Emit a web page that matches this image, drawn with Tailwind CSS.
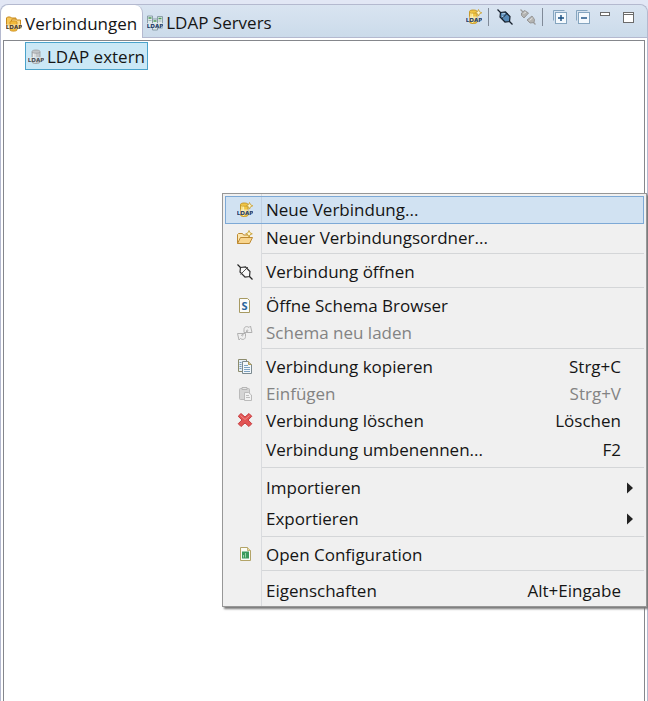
<!DOCTYPE html>
<html lang="de">
<head>
<meta charset="utf-8">
<meta name="viewport" content="width=device-width, initial-scale=1">
<title>Verbindungen</title>
<script src="https://cdn.jsdelivr.net/npm/@tailwindcss/browser@4"></script>
</head>
<body class="bg-[#e2e7f5] font-['Open_Sans','Noto_Sans',sans-serif] text-[17px] leading-6 text-[#151515]">

<!-- Shared icon symbols -->
<svg class="hidden" aria-hidden="true">
  <symbol id="ldap-new" viewBox="0 0 16 16">
    <path d="M3.500 2.500C3.500 .5 11 .5 11 2.500V13c0 2-7.500 2-7.500 0z" fill="#f0c544" stroke="#c79a2a"/>
    <path d="M5 3.500v9.500M6.500 4v10" stroke="#fdf0a8" stroke-width="1.200"/>
    <path d="M3.500 3c0 1.600 7.500 1.600 7.500 0" fill="none" stroke="#c79a2a" stroke-width=".8"/>
    <rect x="3.500" y="7.500" width="8" height="5" fill="#f5efcf" opacity=".7"/>
    <path d="M12.500 .5l1 2.300 2.300 1-2.300 1-1 2.300-1-2.300-2.300-1 2.300-1z" fill="#fff8d0" stroke="#c9a237" stroke-width=".9"/>
    <text x="8" y="12.500" text-anchor="middle" font-family="DejaVu Sans" font-weight="bold" font-size="5.600" fill="#1d3d66">LDAP</text>
  </symbol>
  <symbol id="ldap-folders" viewBox="0 0 16 16">
    <path d="M.5 9.500V2l1-1h3l1 1h4.500v7.500z" fill="#f6c75a" stroke="#c88a1c"/>
    <path d="M5.500 12.500V4l1-1h3l1 1h4v8.500z" fill="#fbd98a" stroke="#c88a1c"/>
    <path d="M4 6c0-1.500 7-1.500 7 0V14c0 1.500-7 1.500-7 0z" fill="#f1b93a" stroke="#c88a1c" stroke-width=".8"/>
    <rect x="0" y="8.500" width="16" height="4.500" fill="#f7e9c4" opacity=".75"/>
    <text x="8" y="13" text-anchor="middle" font-family="DejaVu Sans" font-weight="bold" font-size="5.600" fill="#4a3a26">LDAP</text>
  </symbol>
  <symbol id="ldap-servers" viewBox="0 0 16 16">
    <path d="M.5 1h5v11h-5zM5.500 4h5v11h-5zM10.500 1.500h5V13h-5z" fill="#dfe9ea" stroke="#8297a3" stroke-width=".9"/>
    <path d="M1.500 3h3M6.500 6h3M11.500 3.500h3" stroke="#4d9a57" stroke-width="1.300"/>
    <path d="M1.500 5.500h3M11.500 6h3" stroke="#8fa5ad" stroke-width=".8"/>
    <rect x="0" y="8" width="16" height="4.500" fill="#dce8ee" opacity=".8"/>
    <text x="8" y="12.500" text-anchor="middle" font-family="DejaVu Sans" font-weight="bold" font-size="5.600" fill="#1d3d66">LDAP</text>
  </symbol>
  <symbol id="ldap-closed" viewBox="0 0 16 16">
    <path d="M4 2.500c0-2 8-2 8 0V13c0 2-8 2-8 0z" fill="#c2c5c8" stroke="#9a9da0" stroke-width=".8"/>
    <path d="M5.500 4v9M7 4v10" stroke="#eceeee" stroke-width="1.100"/>
    <path d="M4 3c0 1.600 8 1.600 8 0" fill="none" stroke="#9a9da0" stroke-width=".8"/>
    <rect x="0" y="8" width="16" height="4.500" fill="#d9e6ec" opacity=".8"/>
    <text x="8" y="12.500" text-anchor="middle" font-family="DejaVu Sans" font-weight="bold" font-size="5.600" fill="#4b4f55">LDAP</text>
  </symbol>
</svg>

<main class="relative flex min-h-screen flex-col overflow-hidden pt-1">
  <section class="flex grow flex-col rounded-t-lg border-x border-t border-[#b4b9cf] bg-[#d0deec]">
    <!-- Tabs and view toolbar -->
    <header class="flex h-[33px] items-stretch rounded-t-lg border-b border-[#b4b9cf] bg-linear-to-b from-[#d9e4f1] to-[#cbdbea]">
      <div class="flex" role="tablist">
        <button role="tab" aria-selected="true" class="-mb-px flex items-center gap-[3px] rounded-t-lg border-r border-[#b4b9cf] bg-white px-[5px] pt-1">
          <svg class="size-4"><use href="#ldap-folders"/></svg>Verbindungen
        </button>
        <button role="tab" aria-selected="false" class="flex items-center gap-[3px] pl-1 pt-1">
          <svg class="size-4"><use href="#ldap-servers"/></svg>LDAP Servers
        </button>
      </div>
      <div class="ml-auto flex h-6 items-center pr-[13px]" role="toolbar">
        <button aria-label="Neue Verbindung"><svg class="size-4"><use href="#ldap-new"/></svg></button>
        <span class="mx-1.5 h-[18px] w-px bg-[#808a98]"></span>
        <button aria-label="Verbindung öffnen" class="mx-0.5">
          <svg class="size-4" viewBox="0 0 16 16"><path d="M.5 .5L5 5M11 11l4.500 4.500" stroke="#16202c" stroke-width="1.300"/><path d="M3.500 3.500l5-.5 4.500 4.500-.5 5-4.500.5L3 8z" fill="#5689b6" stroke="#16202c" stroke-width="1.200"/><path d="M10.500 4L4.500 10" stroke="#16202c" stroke-width="1"/><path d="M5 5l3-.5M5 7l1.500 1" stroke="#b7d3ea"/></svg>
        </button>
        <button aria-label="Verbindung schließen" class="ml-[5px]">
          <svg class="size-4" viewBox="0 0 16 16"><path d="M.5 .5L3 3M13 13l2.500 2.500" stroke="#9c9c9c" stroke-width="1.300"/><path d="M1.500 4l3-2.500 4 2.500-4.500 5-2.500-2.500zM7 11l5-4 2.500 3.500-.5 3-4 .5z" fill="#b4b4b2" stroke="#969696"/><path d="M3.500 4.500L6 3M9.500 11.500l3-2.500" stroke="#e4e4e2"/></svg>
        </button>
        <span class="mx-1.5 h-[18px] w-px bg-[#808a98]"></span>
        <button aria-label="Alle aufklappen" class="ml-1">
          <svg class="h-[14px] w-[15px]" viewBox="0 0 15 14"><path d="M.5 10.500V.5h11" fill="none" stroke="#85a5bf"/><rect x="2.500" y="2.500" width="11" height="11" fill="#f4f9fd" stroke="#85a5bf"/><path d="M5 8h6M8 5v6" stroke="#164d80" stroke-width="1.400"/></svg>
        </button>
        <button aria-label="Alle zuklappen" class="ml-2">
          <svg class="h-[14px] w-[15px]" viewBox="0 0 15 14"><path d="M.5 10.500V.5h11" fill="none" stroke="#85a5bf"/><rect x="2.500" y="2.500" width="11" height="11" fill="#f4f9fd" stroke="#85a5bf"/><path d="M5 8h6" stroke="#164d80" stroke-width="1.400"/></svg>
        </button>
        <button aria-label="Minimieren" class="ml-[9px]">
          <svg class="h-[11px] w-[10px]" viewBox="0 0 10 11"><rect x=".5" y=".5" width="9" height="3" fill="#fff" stroke="#6b6b6b"/></svg>
        </button>
        <button aria-label="Maximieren" class="ml-[13px]">
          <svg class="h-[11px] w-[11px]" viewBox="0 0 11 11"><rect x=".5" y=".5" width="10" height="10" fill="#fff" stroke="#6b6b6b"/><path d="M0 2.500h11" stroke="#6b6b6b"/></svg>
        </button>
      </div>
    </header>

    <!-- Connection tree -->
    <div class="flex grow flex-col bg-white px-0.5 pt-0.5">
      <div class="flex grow flex-col border-x border-t border-[#85878c] pt-px pl-[21px]">
        <button class="flex h-7 items-center gap-[3px] self-start border border-[#4ba3cb] bg-[#cbe8f6] px-0.5 pt-0.5">
          <svg class="size-4"><use href="#ldap-closed"/></svg>LDAP extern
        </button>
      </div>
    </div>
  </section>

  <!-- Context menu -->
  <div role="menu" class="absolute top-[193px] right-px left-[222px] border border-[#979797] bg-[#f0f0f0] bg-[linear-gradient(to_right,transparent_38px,#d9dbde_38px,#d9dbde_39px,transparent_39px)] px-0.5 pt-0.5 shadow-[2px_2px_2px_#777]">
    <div class="pb-0.5">
      <button role="menuitem" class="flex h-7 w-full items-center border border-[#7da9d6] bg-[#d1e2f2] pr-[22px]">
        <span class="flex h-full w-9 items-center justify-center border-r border-[#c0d0e2] pl-0.5"><svg class="size-4"><use href="#ldap-new"/></svg></span>
        <span class="pl-1">Neue Verbindung...</span>
      </button>
      <button role="menuitem" class="flex h-[27px] w-full items-center pr-[23px]">
        <span class="flex w-[37px] justify-center pl-0.5"><svg class="size-4" viewBox="0 0 16 16"><path d="M.5 13.500V4.500l1-1h4l1 1.500h6v3" fill="#fce6ae" stroke="#bd8932"/><path d="M.5 13.500l3-6h12l-3 6z" fill="#f8d58e" stroke="#bd8932"/><path d="M12 .5l1 2.300 2.300 1-2.300 1-1 2.300-1-2.300-2.300-1 2.300-1z" fill="#fff8d0" stroke="#c9a237" stroke-width=".9"/></svg></span>
        <span class="pl-1">Neuer Verbindungsordner...</span>
      </button>
    </div>
    <div class="ml-[37px] border-t border-[#d4d6d8]"></div>
    <div class="pt-1 pb-0.5">
      <button role="menuitem" class="flex h-[27px] w-full items-center pr-[23px]">
        <span class="flex w-[37px] justify-center pl-0.5"><svg class="size-4" viewBox="0 0 16 16"><path d="M.5 .5L4 4M11.500 11.500l4 4" stroke="#222" stroke-width="1.200"/><path d="M3.500 3.500l5-.5 4.500 4.500-.5 5-4.500.5L3 8z" fill="#f8f8f8" stroke="#333" stroke-width="1.200"/><path d="M11 3L3.500 10.500" stroke="#444" stroke-width=".9"/></svg></span>
        <span class="pl-1">Verbindung öffnen</span>
      </button>
    </div>
    <div class="ml-[37px] border-t border-[#d4d6d8]"></div>
    <div class="pt-1 pb-0.5">
      <button role="menuitem" class="flex h-[27px] w-full items-center pr-[23px]">
        <span class="flex w-[37px] justify-center pl-0.5"><svg class="size-4" viewBox="0 0 16 16"><path d="M2.500 .5h8l2 2v12h-10z" fill="#fbfcfa" stroke="#a79a62"/><text x="7.500" y="11.500" text-anchor="middle" font-family="Open Sans" font-weight="bold" font-size="11" fill="#2a659c">S</text></svg></span>
        <span class="pl-1">Öffne Schema Browser</span>
      </button>
      <button role="menuitem" disabled class="flex h-[27px] w-full items-center pr-[23px] text-[#838383]">
        <span class="flex w-[37px] justify-center pl-0.5"><svg class="size-4" viewBox="0 0 16 16" fill="#efefef" stroke="#b0b0b0"><path d="M7 7.500V4.500C7 1.500 10 .8 12 2.500l1.500-1.500 1.500 6.500H9.500L11 5.500c-.8-.8-1.500-.5-1.500.5v1.500z"/><path d="M8.500 8.500V11.500c0 3-3 3.700-5 2L2 15 .5 8.500H6L4.500 10.500c.8.8 1.500.5 1.500-.5V8.500z"/></svg></span>
        <span class="pl-1">Schema neu laden</span>
      </button>
    </div>
    <div class="ml-[37px] border-t border-[#d4d6d8]"></div>
    <div class="pt-1 pb-0.5">
      <button role="menuitem" class="flex h-[27px] w-full items-center pr-[23px]">
        <span class="flex w-[37px] justify-center pl-0.5"><svg class="size-4" viewBox="0 0 16 16"><path d="M1.500 .5h8v12h-8z" fill="#e6eff6" stroke="#8c8b6c"/><path d="M2.500 3.500h2M2.500 5.500h2M2.500 7.500h2M2.500 9.500h2" stroke="#7598b8"/><path d="M5.500 2.500h6l3 3v9h-9z" fill="#f2f7fb" stroke="#7b8a90"/><path d="M11.500 2.500v3h3" fill="#d9c78e" stroke="#b09a5b"/><path d="M7 6.500h4M7 8.500h6M7 10.500h6M7 12.500h6" stroke="#7ea3c2"/></svg></span>
        <span class="pl-1">Verbindung kopieren</span><span class="ml-auto">Strg+C</span>
      </button>
      <button role="menuitem" disabled class="flex h-[27px] w-full items-center pr-[23px] text-[#838383]">
        <span class="flex w-[37px] justify-center pl-0.5"><svg class="size-4" viewBox="0 0 16 16"><rect x="2.500" y="2.500" width="10" height="11" rx="1" fill="#d4d4d4" stroke="#bababa"/><path d="M5 3.500v-2h5v2z" fill="#e5e5e5" stroke="#b5b5b5"/><path d="M7.500 6.500h4l3 2.500v5.500h-7z" fill="#f1f1f1" stroke="#bababa"/><path d="M9 9.500h3M9 11.500h4" stroke="#bdbdbd"/></svg></span>
        <span class="pl-1">Einfügen</span><span class="ml-auto">Strg+V</span>
      </button>
      <button role="menuitem" class="flex h-[27px] w-full items-center pr-[23px]">
        <span class="flex w-[37px] justify-center pl-0.5"><svg class="size-4" viewBox="0 0 16 16"><path d="M4 .5l4 3.500 4-3.500 2.800 2.800L11 7l3.800 3.700-2.800 2.800L8 10l-4 3.500-2.800-2.800L5 7 1.200 3.300z" fill="#e25454" stroke="#c73f42" stroke-linejoin="round"/><path d="M3.500 2.500L8 6.500l4.500-4" fill="none" stroke="#f08a86"/></svg></span>
        <span class="pl-1">Verbindung löschen</span><span class="ml-auto">Löschen</span>
      </button>
      <button role="menuitem" class="flex h-[31px] w-full items-center pr-[23px] pl-[37px]">
        <span class="pl-1">Verbindung umbenennen...</span><span class="ml-auto">F2</span>
      </button>
    </div>
    <div class="ml-[37px] border-t border-[#d4d6d8]"></div>
    <div class="pt-1 pb-0.5">
      <button role="menuitem" aria-haspopup="menu" class="flex h-[31px] w-full items-center pr-[11px] pl-[37px]">
        <span class="pl-1">Importieren</span>
        <svg class="ml-auto h-3 w-1.5" viewBox="0 0 6 12"><path d="M0 .5L6 6 0 11.500z" fill="#222"/></svg>
      </button>
      <button role="menuitem" aria-haspopup="menu" class="flex h-[31px] w-full items-center pr-[11px] pl-[37px]">
        <span class="pl-1">Exportieren</span>
        <svg class="ml-auto h-3 w-1.5" viewBox="0 0 6 12"><path d="M0 .5L6 6 0 11.500z" fill="#222"/></svg>
      </button>
    </div>
    <div class="ml-[37px] border-t border-[#d4d6d8]"></div>
    <div class="pt-1 pb-0.5">
      <button role="menuitem" class="flex h-[27px] w-full items-center pr-[23px]">
        <span class="flex w-[37px] justify-center pl-0.5"><svg class="size-4" viewBox="0 0 16 16"><path d="M3.500 .5h7l3 3v10h-10z" fill="#fbfcf6" stroke="#b3a468"/><path d="M10.500 .5v3h3" fill="#ead9a0" stroke="#b3a468" stroke-width=".8"/><rect x="5" y="4.500" width="7" height="7" fill="#3b9a5c"/><path d="M6.500 10.500V8M8.500 10.500V6" stroke="#9ad3a6"/></svg></span>
        <span class="pl-1">Open Configuration</span>
      </button>
    </div>
    <div class="ml-[37px] border-t border-[#d4d6d8]"></div>
    <div class="pt-1">
      <button role="menuitem" class="flex h-[31px] w-full items-center pr-[23px] pl-[37px]">
        <span class="pl-1">Eigenschaften</span><span class="ml-auto">Alt+Eingabe</span>
      </button>
    </div>
  </div>
</main>
</body>
</html>
